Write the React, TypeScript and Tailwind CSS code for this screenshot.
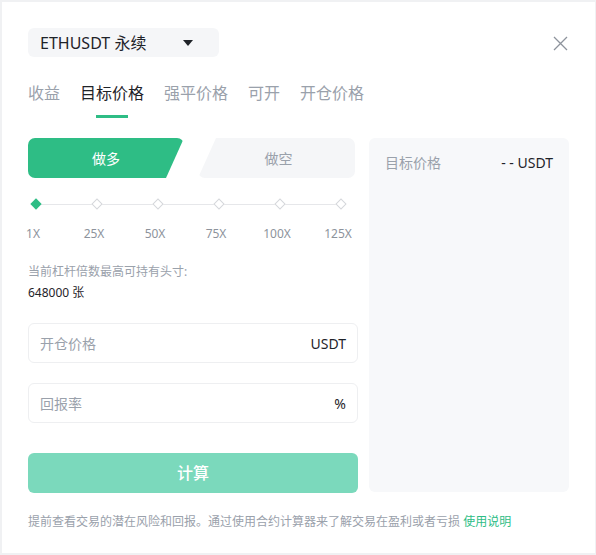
import React from "react";

const font = { fontFamily: '"Noto Sans", "Noto Sans CJK SC", sans-serif' };

export default function App() {
  const levels = ["1X", "25X", "50X", "75X", "100X", "125X"];
  return (
    <div className="w-[596px] h-[555px] bg-[#f0f1f3] pt-[2px] pl-[2px] pr-[1px] pb-[2px]" style={font}>
      <div className="w-full h-full bg-white pl-[26px] pr-[25px] pt-[26px]">
        {/* header */}
        <div className="flex items-start justify-between">
          <div className="w-[191px] h-[29px] rounded-[6px] bg-[#f5f6f8] flex items-center pl-[12px] pr-[26px] justify-between">
            <span className="text-[16px] text-[#1f2329] leading-none">ETHUSDT 永续</span>
            <svg width="10" height="6" viewBox="0 0 10 6"><path d="M0 0 L10 0 L5 6 Z" fill="#1f2329" /></svg>
          </div>
          <svg width="15" height="15" viewBox="0 0 15 15" className="mt-[8px] mr-[2px]">
            <path d="M1 1 L14 14 M14 1 L1 14" stroke="#8d939c" strokeWidth="1.3" />
          </svg>
        </div>
        {/* tabs */}
        <div className="flex gap-[20px] mt-[24px] text-[16px] leading-[24px]">
          <span className="text-[#9aa1ab]">收益</span>
          <div className="flex flex-col items-center">
            <span className="text-[#1f2329]">目标价格</span>
            <div className="w-[32px] h-[3px] bg-[#2ebd85] mt-[10px]" />
          </div>
          <span className="text-[#9aa1ab]">强平价格</span>
          <span className="text-[#9aa1ab]">可开</span>
          <span className="text-[#9aa1ab]">开仓价格</span>
        </div>
        {/* body */}
        <div className="flex gap-[11px] mt-[20px]">
          <div className="w-[330px] flex flex-col">
            <div className="flex gap-[14px] h-[40px]">
              <div className="w-[156px] h-full bg-[#2ebd85] rounded-[7px] flex items-center justify-center text-white text-[14px] [clip-path:polygon(0_0,100%_0,calc(100%-18px)_100%,0_100%)]">
                <span>做多</span>
              </div>
              <div className="w-[157px] h-full bg-[#f5f6f8] rounded-[7px] flex items-center justify-center text-[#9aa1ab] text-[14px] [clip-path:polygon(18px_0,100%_0,100%_100%,0_100%)]">
                <span className="ml-[4px]">做空</span>
              </div>
            </div>
            {/* slider */}
            <div className="relative mt-[21px] h-[40px]">
              <div className="absolute left-[8px] right-[17px] top-[5px] h-[1px] bg-[#e6e7ea]" />
              <div className="relative flex justify-between pr-[9px]">
                {levels.map((l, i) => (
                  <div key={l} className="w-[16px] flex flex-col items-center">
                    <div
                      className={
                        i === 0
                          ? "w-[8px] h-[8px] rotate-45 bg-[#2ebd85] mt-[1px]"
                          : "w-[8px] h-[8px] rotate-45 bg-white border border-[#d5d7db] mt-[1px]"
                      }
                    />
                    <span className="mt-[18px] -translate-x-[3px] text-[12px] leading-[16px] text-[#8d939c] whitespace-nowrap">{l}</span>
                  </div>
                ))}
              </div>
            </div>
            <div className="mt-[23px] text-[12px] leading-[20px] text-[#9aa1ab]">当前杠杆倍数最高可持有头寸:</div>
            <div className="mt-[1px] text-[12px] leading-[20px] text-[#1f2329]">648000 张</div>
            <div className="mt-[20px] h-[40px] rounded-[6px] border border-[#eeeff1] flex items-center justify-between px-[11px] text-[14px]">
              <span className="text-[#9aa1ab]">开仓价格</span>
              <span className="text-[#1f2329]">USDT</span>
            </div>
            <div className="mt-[20px] h-[40px] rounded-[6px] border border-[#eeeff1] flex items-center justify-between px-[11px] text-[14px]">
              <span className="text-[#9aa1ab]">回报率</span>
              <span className="text-[#1f2329]">%</span>
            </div>
            <div className="mt-[30px] h-[40px] rounded-[6px] bg-[#7bd9bc] flex items-center justify-center text-white text-[16px] font-medium">
              计算
            </div>
          </div>
          <div className="w-[200px] h-[354px] bg-[#f7f8fa] rounded-[6px] flex justify-between px-[16px] pt-[15px] text-[14px] leading-[20px]">
            <span className="text-[#9aa1ab]">目标价格</span>
            <span className="text-[#1f2329]">-&nbsp;- USDT</span>
          </div>
        </div>
        <div className="mt-[19px] text-[12px] leading-[20px] text-[#9aa1ab]">
          提前查看交易的潜在风险和回报。通过使用合约计算器来了解交易在盈利或者亏损 <span className="text-[#2ebd85]">使用说明</span>
        </div>
      </div>
    </div>
  );
}
